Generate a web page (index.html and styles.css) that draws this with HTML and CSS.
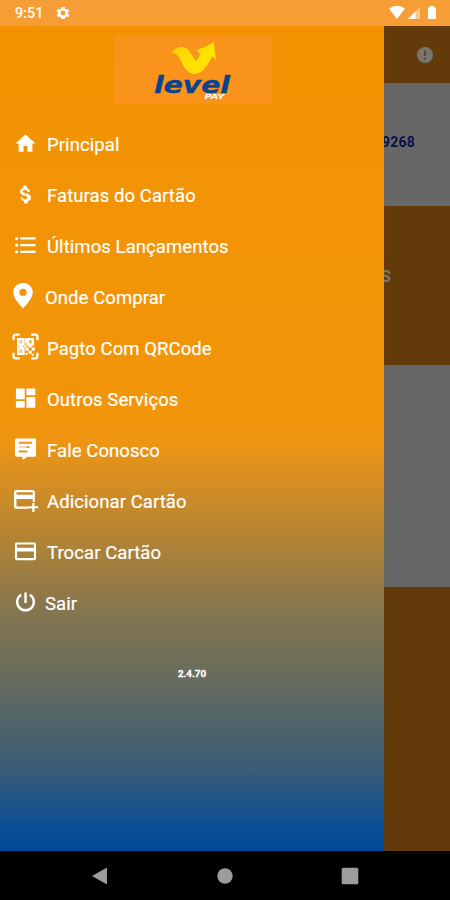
FILE: index.html
```html
<!DOCTYPE html>
<html lang="pt-BR">
<head>
<meta charset="utf-8">
<title>Level Pay</title>
<link rel="stylesheet" href="styles.css">
</head>
<body>
<div class="phone">
  <header class="status">
    <span class="clock">9:51</span>
    <svg class="gear" width="16" height="16" viewBox="0 0 24 24"><path fill="#fff" fill-rule="evenodd" d="M19.4 13c.1-.7.1-1.3 0-2l2.1-1.6-2-3.5-2.500 1a8 8 0 0 0-1.700-1L15 3.200h-6l-.4 2.700a8 8 0 0 0-1.700 1l-2.500-1-2 3.500L4.500 11c-.1.700-.1 1.300 0 2l-2.100 1.600 2 3.500 2.500-1a8 8 0 0 0 1.700 1l.4 2.700h6l.4-2.700a8 8 0 0 0 1.700-1l2.500 1 2-3.500zM12 8.300a3.700 3.700 0 1 1 0 7.400 3.700 3.700 0 0 1 0-7.400z"/></svg>
    <svg class="signals" width="50" height="16" viewBox="0 0 50 16">
      <path fill="#fff" d="M1 3.500Q9-2 17 3.500L9 14z"/>
      <path fill="#fff" opacity=".45" d="M32 2v12H20z"/><path fill="#fff" d="M27.500 6.500V14H20z"/>
      <path fill="#fff" d="M42 1h4v1.500h2V14h-8V2.500h2z"/>
    </svg>
  </header>
  <main class="screen">
    <div class="page">
      <div class="appbar"><svg width="18" height="18" viewBox="0 0 18 18"><circle cx="9" cy="9" r="8" fill="#777471"/><path d="M9 4.500v5.500M9 11.500v2" stroke="#633b0a" stroke-width="1.600"/></svg></div>
      <div class="account">9268</div>
      <div class="band">S</div>
      <div class="panel"></div>
    </div>
    <nav class="drawer">
      <div class="logo">
        <svg width="158" height="68" viewBox="0 0 158 68">
          <defs><linearGradient id="gold" x1="0" y1="0" x2="1" y2="1"><stop offset="0" stop-color="#ffc90b"/><stop offset=".6" stop-color="#ffe400"/><stop offset="1" stop-color="#ffd500"/></linearGradient></defs>
          <path fill="url(#gold)" d="M57.500 17Q61 11 67 11Q73 11 76 16L82 25Q85 22 86 18.500L82.500 14Q92 11 100 6Q100.500 15 102 24L98 20.500Q94 30 87 36Q82 39.500 76 37Q71 34 67.500 26Q64 17 57.500 17z"/>
          <text class="brand" x="40" y="56.500" textLength="76" lengthAdjust="spacingAndGlyphs">level</text>
          <text class="brand-sub" x="90.500" y="63.300" textLength="20" lengthAdjust="spacingAndGlyphs">PAY</text>
        </svg>
      </div>
      <ul class="menu">
        <li><svg viewBox="0 0 24 24"><path d="M10 20.500v-6h4v6h5.200v-8.500H22.500L12 2.500 1.500 12h3.300v8.500z"/></svg><span>Principal</span></li>
        <li><svg viewBox="0 0 24 24"><path stroke="#fff" stroke-width=".6" d="M11.800 10.900c-2.270-.59-3-1.200-3-2.150 0-1.090 1.010-1.850 2.700-1.850 1.780 0 2.440.85 2.500 2.100h2.210c-.07-1.720-1.120-3.300-3.210-3.810V3h-3v2.160c-1.940.42-3.500 1.680-3.500 3.610 0 2.310 1.910 3.460 4.700 4.130 2.500.6 3 1.480 3 2.410 0 .69-.49 1.790-2.700 1.790-2.060 0-2.870-.92-2.980-2.100H7.320c.12 2.190 1.760 3.420 3.680 3.830V21h3v-2.150c1.950-.37 3.500-1.500 3.500-3.550 0-2.840-2.430-3.810-5.700-4.400z"/></svg><span>Faturas do Cartão</span></li>
        <li><svg viewBox="0 0 24 24"><path d="M6.500 3.500h16v2.300h-16zm0 7h16v2.300h-16zm0 7h16v2.300h-16z"/><circle cx="2.800" cy="4.700" r="1.700"/><circle cx="2.800" cy="11.700" r="1.700"/><circle cx="2.800" cy="18.700" r="1.700"/></svg><span>Últimos Lançamentos</span></li>
        <li class="near"><svg class="pin" viewBox="0 0 24 24"><path fill-rule="evenodd" d="M12 .8c-4.900 0-8.700 3.700-8.700 8.400 0 6.100 8.700 14.300 8.700 14.300s8.700-8.200 8.700-14.300C20.700 4.500 16.900.8 12 .8zm0 11.500a3.200 3.200 0 1 1 0-6.400 3.200 3.200 0 0 1 0 6.400z"/></svg><span>Onde Comprar</span></li>
        <li><svg class="qr" viewBox="0 0 26 26"><g fill="none" stroke="#fff" stroke-width="2.200"><path d="M1.500 7V3.500q0-2 2-2h4M18.500 1.500h4q2 0 2 2V7M24.500 19v3.500q0 2-2 2h-4M7.500 24.500h-4q-2 0-2-2V19"/><path d="M6 6h5v5H6zM6 15h5v5H6zM15.500 6H20v5h-4.500z" stroke-width="2.400"/></g><path d="M7.800 7.800h1.400v1.400H7.800zM7.800 16.800h1.400v1.400H7.800zM12.500 5h2v5h-2zM12 11h2v3h-2zM13 14h3v3h-3zM16 17h3v3h-3zM19 14h3v3h-3zM13 19h2v2h-2zM19 20h2v2h-2zM5 12.500h6v1.500H5zM16 12h3v2h-3z"/></svg><span>Pagto Com QRCode</span></li>
        <li><svg viewBox="0 0 24 24"><path d="M2 1.500h9.200v11.200H2zM2 14.700h9.200v7H2zM13 1.500h9.200v7H13zM13 10.500h9.200v11.200H13z"/></svg><span>Outros Serviços</span></li>
        <li><svg viewBox="0 0 24 24"><path fill-rule="evenodd" d="M3 .5h18.500q1.500 0 1.500 1.500v16q0 1.500-1.500 1.500H14l-5 3.500v-3.500H3q-2 0-2-2V2.500q0-2 2-2zM5 4v2h14V4zM5 8.500v2h11v-2zM5 13v2h9v-2z"/><path opacity=".65" d="M5 8.500h8v2H5z"/></svg><span>Fale Conosco</span></li>
        <li><svg class="add" viewBox="0 0 24 24"><path fill-rule="evenodd" d="M2.500 2h16q2 0 2 2v9.500h-2V10.500H2.800v7.200H15V20H2.500q-2 0-2-2V4q0-2 2-2zm.3 2v2.500h15.700V4zM18 14.500h2.200v3h3.500v2h-3.500v3.500H18v-3.500h-3v-2h3z"/></svg><span>Adicionar Cartão</span></li>
        <li><svg viewBox="0 0 24 24"><path fill-rule="evenodd" d="M3 2.500h18q2 0 2 2v14.500q0 2-2 2H3q-2 0-2-2V4.500q0-2 2-2zm0 2.300V8h18V4.800zM3.200 12v6.800h17.600V12z"/></svg><span>Trocar Cartão</span></li>
        <li class="near"><svg viewBox="0 0 24 24"><path fill="none" stroke="#fff" stroke-width="2.500" d="M12 1.500v11M7.500 4a8.700 8.700 0 1 0 9 0"/></svg><span>Sair</span></li>
      </ul>
      <p class="version">2.4.70</p>
    </nav>
  </main>
  <footer class="navbar">
    <svg viewBox="0 0 18 18"><path d="M1 9L15 1q1-.4 1 .6v14.800q0 1-1 .6z"/></svg>
    <svg viewBox="0 0 18 18"><circle cx="9" cy="9" r="7.700"/></svg>
    <svg viewBox="0 0 18 18"><rect x=".7" y=".7" width="16.600" height="16.600" rx="1.500"/></svg>
  </footer>
</div>
</body>
</html>
```
FILE: styles.css
```css
* { box-sizing: border-box; }
body { margin: 0; font-family: Roboto, "Liberation Sans", sans-serif; }
.phone { width: 450px; height: 900px; display: flex; flex-direction: column; overflow: hidden; background: #000; }
.status { height: 26px; flex: none; display: flex; align-items: center; padding: 0 12px 0 15px; background: #f69d35; color: #fff; }
.clock { font-size: 14.5px; font-weight: 500; width: 40px; }
.gear { display: block; }
.signals { display: block; margin-left: auto; }
.screen { position: relative; height: 825px; flex: none; }
.page { height: 100%; display: flex; flex-direction: column; background: #633b0a; }
.appbar { height: 57px; display: flex; justify-content: flex-end; align-items: center; padding-right: 16px; }
.account { height: 123px; background: #676767; color: #0b1146; display: flex; align-items: center; justify-content: flex-end; padding: 0 35px 5px 0; font-size: 14px; font-weight: 700; letter-spacing: .2px; }
.band { height: 159px; display: flex; align-items: center; justify-content: flex-end; padding: 0 59px 20px 0; color: #787572; font-size: 17px; font-weight: 700; }
.panel { height: 222px; background: #676767; }
.drawer { position: absolute; inset: 0 auto 0 0; width: 384px; background: linear-gradient(#f29200 0, #f1950a 390px, #ef9512 415px, #d98f20 450px, #85764e 585px, #6d6e5a 640px, #3c5d76 740px, #0b4e93 800px, #00489a 825px); }
.logo { width: 158px; height: 68px; margin: 10px 0 0 114px; background: #fa931c; }
.logo svg { display: block; }
.brand { font: italic 700 22.5px "DejaVu Sans", sans-serif; fill: #0b438f; stroke: #0b438f; stroke-width: .4px; }
.brand-sub { font: italic 700 7px "DejaVu Sans", sans-serif; fill: #fff; }
.menu { list-style: none; margin: 14px 0 0; padding: 0; color: #fff; }
.menu li { height: 51px; display: flex; align-items: center; gap: 8px; padding-left: 14px; font-size: 18.5px; letter-spacing: .08px; -webkit-text-stroke: .2px #fff; }
.menu li span { padding-left: 2px; padding-top: 2px; white-space: nowrap; }
.menu .near span { padding-left: 0; }
.menu svg { width: 23px; height: 23px; flex: none; fill: #fff; }
.menu .pin { width: 28px; height: 27px; margin: -2px 0 0 -5px; }
.menu .qr { width: 27px; height: 27px; margin: -2px -2px 0; }
.menu .add { width: 26px; height: 25px; margin: 0 -2px 0 -1px; }
.version { margin: 40px 0 0; text-align: center; font-size: 9.8px; font-weight: 700; line-height: 12px; color: #fff; -webkit-text-stroke: .3px #fff; }
.navbar { height: 49px; display: flex; justify-content: space-between; padding: 0 91px; align-items: center; background: #000; }
.navbar svg { width: 18px; height: 18px; fill: #9c9c9c; }
```
